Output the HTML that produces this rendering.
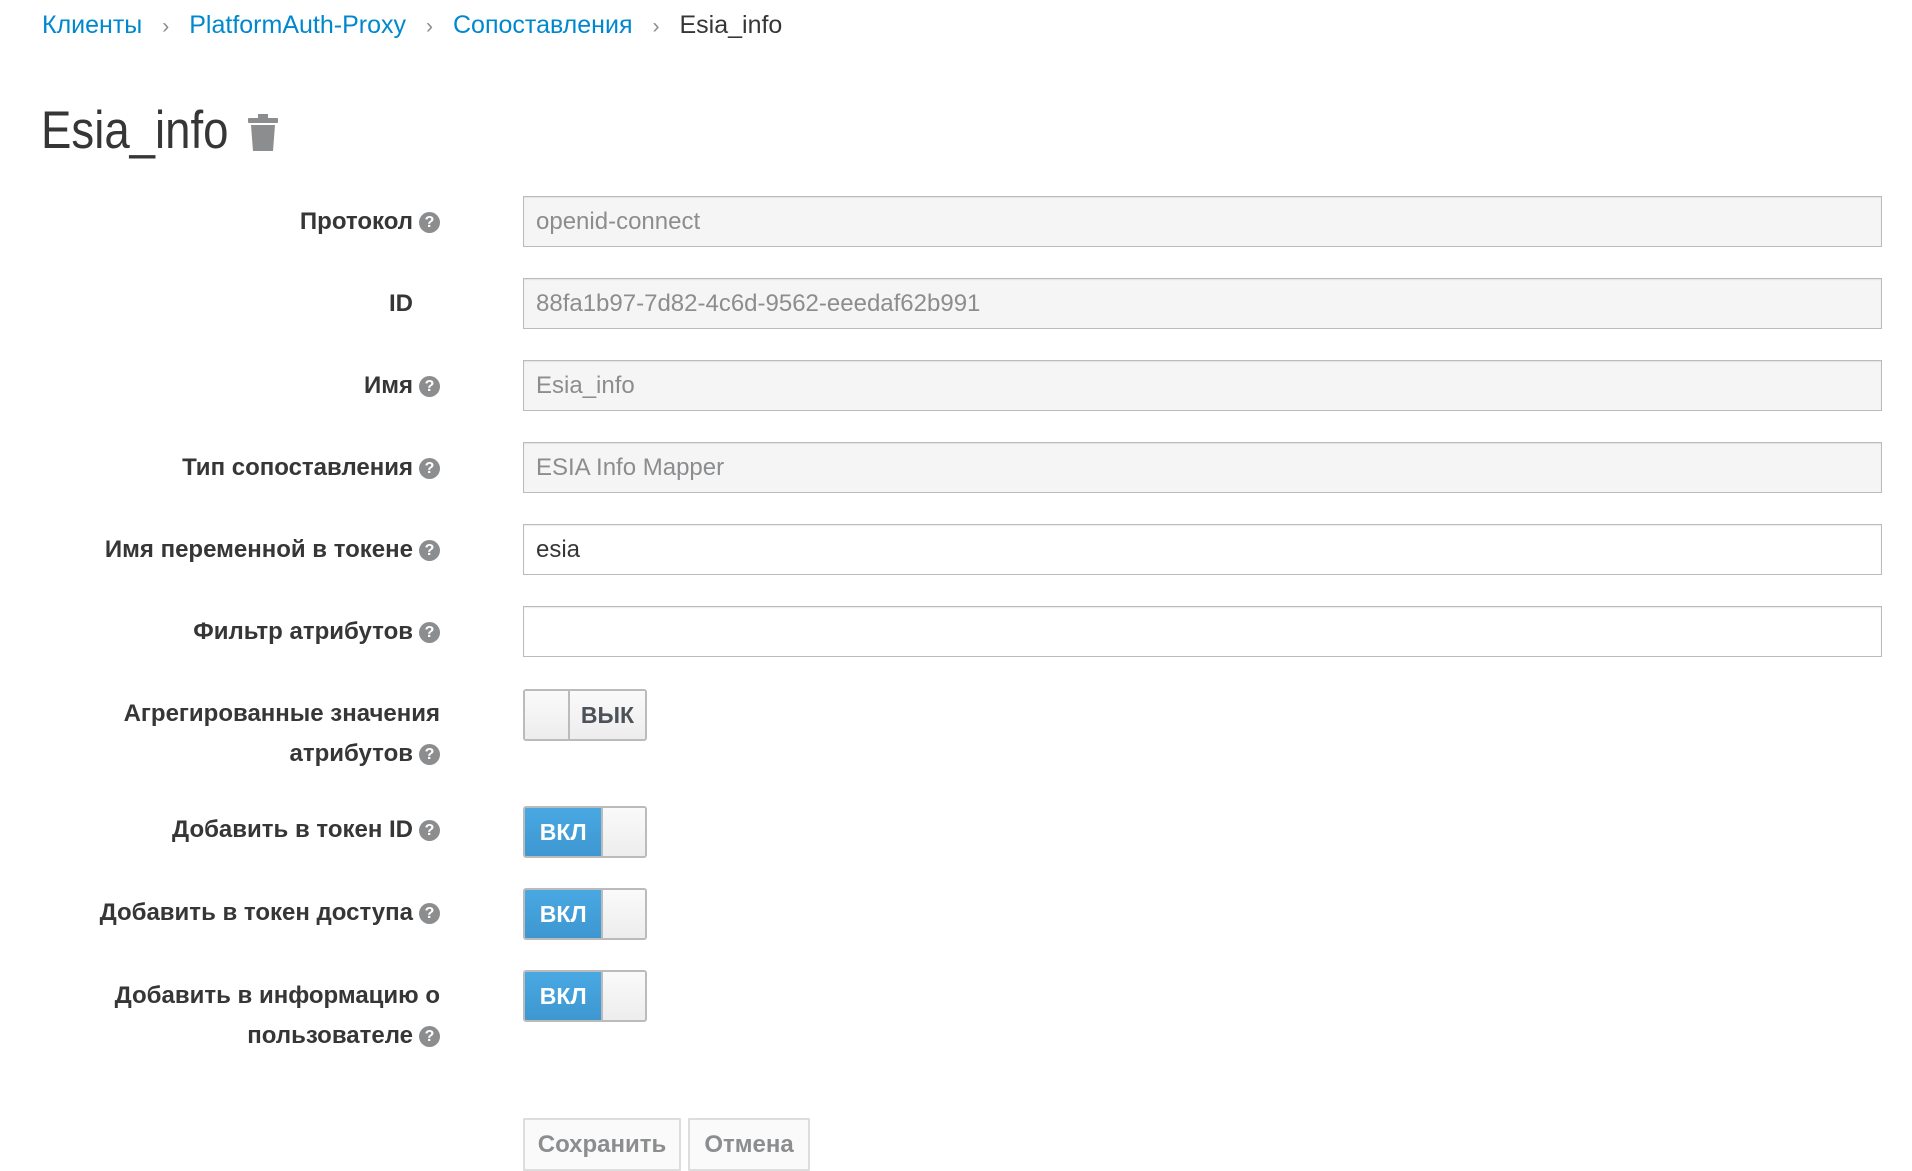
<!DOCTYPE html>
<html><head><meta charset="utf-8"><style>
body{margin:0;width:1912px;height:1170px;background:#fff;font-family:"Liberation Sans","DejaVu Sans",sans-serif;color:#363636;position:relative;overflow:hidden}
.a{position:absolute}
.bc{top:11px;left:42px;font-size:25px;white-space:nowrap}
.bc a{color:#0088ce;text-decoration:none}
.bc .s{color:#8b8d8f;margin:0 20px;font-size:21px}
.t{top:100px;left:41px;font-size:53px;font-weight:300;color:#363636;transform:scaleX(.86);transform-origin:0 0}
.lbl{right:1472px;width:460px;text-align:right;font-weight:bold;font-size:24px;line-height:40px;color:#363636}
.q{display:inline-block;width:21px;height:21px;border-radius:50%;background:#8b8d8f;color:#fff;font-size:16px;line-height:21px;text-align:center;vertical-align:2px;margin-left:6px;font-weight:bold}
.inp{left:523px;height:49px;border:1px solid #bbb;box-shadow:inset 0 1px 1px rgba(3,3,3,.08);background:#f5f5f5;color:#8b8d8f;font-size:24px;line-height:50px;padding-left:12px;width:1345px}
.inp.w{background:#fff;color:#363636}
.tg{left:523px;width:120px;height:48px;border:2px solid #bbb;border-radius:3px;overflow:hidden;display:flex;background:linear-gradient(#fafafa,#ededed)}
.tg .on{width:79px;background:linear-gradient(#49a8e2,#3e97d0);color:#fff;font-weight:bold;font-size:23px;line-height:48px;text-align:center}
.tg .h{width:43px;border-left:2px solid #bbb;background:linear-gradient(#fafafa,#ededed)}
.tg .off{flex:1;color:#4d5258;font-weight:bold;font-size:23px;line-height:48px;text-align:center}
.btn{top:1118px;height:49px;border:2px solid #ddd;background:#fafafa;color:#8b8d8f;font-weight:bold;font-size:24px;line-height:49px;text-align:center;border-radius:1px}
</style></head><body>
<div class="a bc"><a>Клиенты</a><span class="s">›</span><a>PlatformAuth-Proxy</a><span class="s">›</span><a>Сопоставления</a><span class="s">›</span><span>Esia_info</span></div>
<div class="a t">Esia_info</div>
<svg class="a" style="left:247px;top:114px" width="32" height="37" viewBox="0 0 32 37"><rect x="11" y="0" width="10" height="4" fill="#8b8d8f"/><rect x="1" y="4" width="30" height="5" rx="1" fill="#8b8d8f"/><path d="M4 11h24l-2 26H6z" fill="#8b8d8f"/></svg>

<div class="a lbl" style="top:202px">Протокол<span class="q">?</span></div>
<div class="a inp" style="top:196px">openid-connect</div>
<div class="a lbl" style="top:284px">ID<span style="display:inline-block;width:27px"></span></div>
<div class="a inp" style="top:278px">88fa1b97-7d82-4c6d-9562-eeedaf62b991</div>
<div class="a lbl" style="top:366px">Имя<span class="q">?</span></div>
<div class="a inp" style="top:360px">Esia_info</div>
<div class="a lbl" style="top:448px">Тип сопоставления<span class="q">?</span></div>
<div class="a inp" style="top:442px">ESIA Info Mapper</div>
<div class="a lbl" style="top:530px">Имя переменной в токене<span class="q">?</span></div>
<div class="a inp w" style="top:524px">esia</div>
<div class="a lbl" style="top:612px">Фильтр атрибутов<span class="q">?</span></div>
<div class="a inp w" style="top:606px"></div>

<div class="a lbl" style="top:694px">Агрегированные значения<br>атрибутов<span class="q">?</span></div>
<div class="a tg" style="top:689px"><div class="h" style="border-left:0;border-right:2px solid #bbb"></div><div class="off">ВЫК</div></div>
<div class="a lbl" style="top:810px">Добавить в токен ID<span class="q">?</span></div>
<div class="a tg" style="top:806px"><div class="on">ВКЛ</div><div class="h"></div></div>
<div class="a lbl" style="top:893px">Добавить в токен доступа<span class="q">?</span></div>
<div class="a tg" style="top:888px"><div class="on">ВКЛ</div><div class="h"></div></div>
<div class="a lbl" style="top:976px">Добавить в информацию о<br>пользователе<span class="q">?</span></div>
<div class="a tg" style="top:970px"><div class="on">ВКЛ</div><div class="h"></div></div>

<div class="a btn" style="left:523px;width:154px">Сохранить</div>
<div class="a btn" style="left:688px;width:118px">Отмена</div>
</body></html>
